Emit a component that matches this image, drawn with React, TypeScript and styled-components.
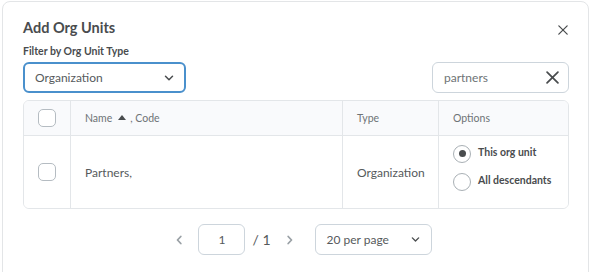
import React from "react";
import styled, { createGlobalStyle } from "styled-components";

const Global = createGlobalStyle`
  html, body { margin: 0; padding: 0; background: #ffffff; }
  body { font-family: Lato, "Noto Sans", sans-serif; color: #494c4e; overflow: hidden; }
  * { box-sizing: border-box; }
`;

const Card = styled.div`
  margin: 1px 0 0 2px;
  width: 587px;
  min-height: 300px;
  border: 1px solid #e3e5e7;
  border-radius: 8px;
  padding: 17px 19px 0 20px;
  background: #fff;
`;

const HeaderRow = styled.div`
  display: flex;
  align-items: flex-start;
  justify-content: space-between;
`;

const Title = styled.h1`
  margin: 0;
  font-size: 14.5px;
  font-weight: 700;
  line-height: 18px;
  color: #494c4e;
`;

const CloseButton = styled.button`
  border: none;
  background: transparent;
  padding: 0;
  width: 20px;
  height: 18px;
  margin: 2px -4px -2px 0;
  display: flex;
  align-items: center;
  justify-content: center;
  color: #494c4e;
`;

const Label = styled.div`
  margin-top: 7px;
  font-size: 10.5px;
  font-weight: 700;
  line-height: 14px;
  color: #494c4e;
`;

const ControlsRow = styled.div`
  display: flex;
  justify-content: space-between;
  align-items: center;
  margin-top: 4px;
`;

const SelectBox = styled.div<{ $focused?: boolean; $width: number }>`
  width: ${(p) => p.$width}px;
  height: 31px;
  border: ${(p) => (p.$focused ? "2px solid #4a90cc" : "1px solid #cdd5dc")};
  border-radius: 6px;
  display: flex;
  align-items: center;
  justify-content: space-between;
  padding: 0 ${(p) => (p.$focused ? 10 : 11)}px 0 ${(p) => (p.$focused ? 10 : 11)}px;
  font-size: 12px;
  color: #565a5c;
`;

const SearchBox = styled.div`
  width: 137px;
  height: 31px;
  border: 1px solid #cdd5dc;
  border-radius: 6px;
  display: flex;
  align-items: center;
  justify-content: space-between;
  padding: 0 9px 0 11px;
  font-size: 12px;
  color: #6e7376;
`;

const Table = styled.div`
  margin-top: 7px;
  border: 1px solid #e3e6e9;
  border-radius: 6px;
  display: grid;
  grid-template-columns: 47px 272px 96px 1fr;
  grid-template-rows: 35px 72px;
  overflow: hidden;
`;

const Cell = styled.div<{ $head?: boolean; $center?: boolean; $last?: boolean }>`
  display: flex;
  align-items: center;
  justify-content: ${(p) => (p.$center ? "center" : "flex-start")};
  padding-left: ${(p) => (p.$center ? 0 : 14)}px;
  background: ${(p) => (p.$head ? "#f9fafc" : "#fff")};
  border-right: ${(p) => (p.$last ? "none" : "1px solid #e3e6e9")};
  border-bottom: ${(p) => (p.$head ? "1px solid #e3e6e9" : "none")};
  font-size: ${(p) => (p.$head ? 10.5 : 12)}px;
  color: ${(p) => (p.$head ? "#6e7376" : "#565a5c")};
`;

const Checkbox = styled.span`
  width: 18px;
  height: 18px;
  border: 1px solid #b5bcc2;
  border-radius: 5px;
  background: #fff;
  display: inline-block;
`;

const SortArrow = styled.span`
  display: inline-block;
  width: 0;
  height: 0;
  border-left: 4px solid transparent;
  border-right: 4px solid transparent;
  border-bottom: 5px solid #494c4e;
  margin: 0 4px 1px 6px;
`;

const OptionList = styled.div`
  display: flex;
  flex-direction: column;
  gap: 10px;
  margin-top: -9px;
`;

const RadioRow = styled.label`
  display: flex;
  align-items: center;
  gap: 7px;
  font-size: 10.5px;
  font-weight: 700;
  color: #494c4e;
`;

const Radio = styled.span<{ $checked?: boolean }>`
  width: 18px;
  height: 18px;
  border-radius: 50%;
  border: 1px solid #a9b0b5;
  background: #fff;
  display: flex;
  align-items: center;
  justify-content: center;
  &::after {
    content: "";
    width: 7px;
    height: 7px;
    border-radius: 50%;
    background: #494c4e;
    display: ${(p) => (p.$checked ? "block" : "none")};
  }
`;

const RadioText = styled.span`
  margin-top: -4px;
`;

const Pager = styled.div`
  display: flex;
  align-items: center;
  justify-content: center;
  margin-top: 15px;
  padding-left: 15px;
`;

const Chevron = styled.span<{ $left: number; $right: number }>`
  display: flex;
  color: #9aa1a6;
  margin: 0 ${(p) => p.$right}px 0 ${(p) => p.$left}px;
`;

const PageInput = styled.div`
  width: 47px;
  height: 31px;
  border: 1px solid #cdd5dc;
  border-radius: 6px;
  display: flex;
  align-items: center;
  justify-content: center;
  font-size: 12px;
  color: #565a5c;
`;

const PageTotal = styled.span`
  font-size: 14px;
  color: #565a5c;
  margin-left: 7px;
`;

const ChevronDown = ({ size = 10 }: { size?: number }) => (
  <svg width={size} height={size} viewBox="0 0 10 10" fill="none">
    <path d="M1.5 3.2 L5 6.7 L8.5 3.2" stroke="#494c4e" strokeWidth="1.5" strokeLinecap="round" strokeLinejoin="round" />
  </svg>
);

const XIcon = ({ size, stroke }: { size: number; stroke: number }) => (
  <svg width={size} height={size} viewBox="0 0 12 12" fill="none">
    <path d="M1 1 L11 11 M11 1 L1 11" stroke="#494c4e" strokeWidth={stroke} strokeLinecap="round" />
  </svg>
);

const ChevronSide = ({ dir }: { dir: "left" | "right" }) => (
  <svg width="8" height="12" viewBox="0 0 8 12" fill="none">
    <path
      d={dir === "left" ? "M5.8 2.5 L2.5 6 L5.8 9.5" : "M2.2 2.5 L5.5 6 L2.2 9.5"}
      stroke="currentColor"
      strokeWidth="1.8"
      strokeLinecap="round"
      strokeLinejoin="round"
    />
  </svg>
);

export default function App() {
  return (
    <>
      <Global />
      <Card>
        <HeaderRow>
          <Title>Add Org Units</Title>
          <CloseButton aria-label="Close">
            <XIcon size={10} stroke={1.5} />
          </CloseButton>
        </HeaderRow>
        <Label>Filter by Org Unit Type</Label>
        <ControlsRow>
          <SelectBox $focused $width={163}>
            <span>Organization</span>
            <ChevronDown />
          </SelectBox>
          <SearchBox>
            <span>partners</span>
            <XIcon size={13} stroke={1.6} />
          </SearchBox>
        </ControlsRow>
        <Table>
          <Cell $head $center>
            <Checkbox />
          </Cell>
          <Cell $head>
            Name
            <SortArrow />, Code
          </Cell>
          <Cell $head>Type</Cell>
          <Cell $head $last>Options</Cell>
          <Cell $center>
            <Checkbox />
          </Cell>
          <Cell>Partners,</Cell>
          <Cell>Organization</Cell>
          <Cell $last>
            <OptionList>
              <RadioRow>
                <Radio $checked />
                <RadioText>This org unit</RadioText>
              </RadioRow>
              <RadioRow>
                <Radio />
                <RadioText>All descendants</RadioText>
              </RadioRow>
            </OptionList>
          </Cell>
        </Table>
        <Pager>
          <Chevron $left={0} $right={15}>
            <ChevronSide dir="left" />
          </Chevron>
          <PageInput>1</PageInput>
          <PageTotal>/ 1</PageTotal>
          <Chevron $left={15} $right={21}>
            <ChevronSide dir="right" />
          </Chevron>
          <SelectBox $width={117}>
            <span>20 per page</span>
            <ChevronDown size={9} />
          </SelectBox>
        </Pager>
      </Card>
    </>
  );
}
